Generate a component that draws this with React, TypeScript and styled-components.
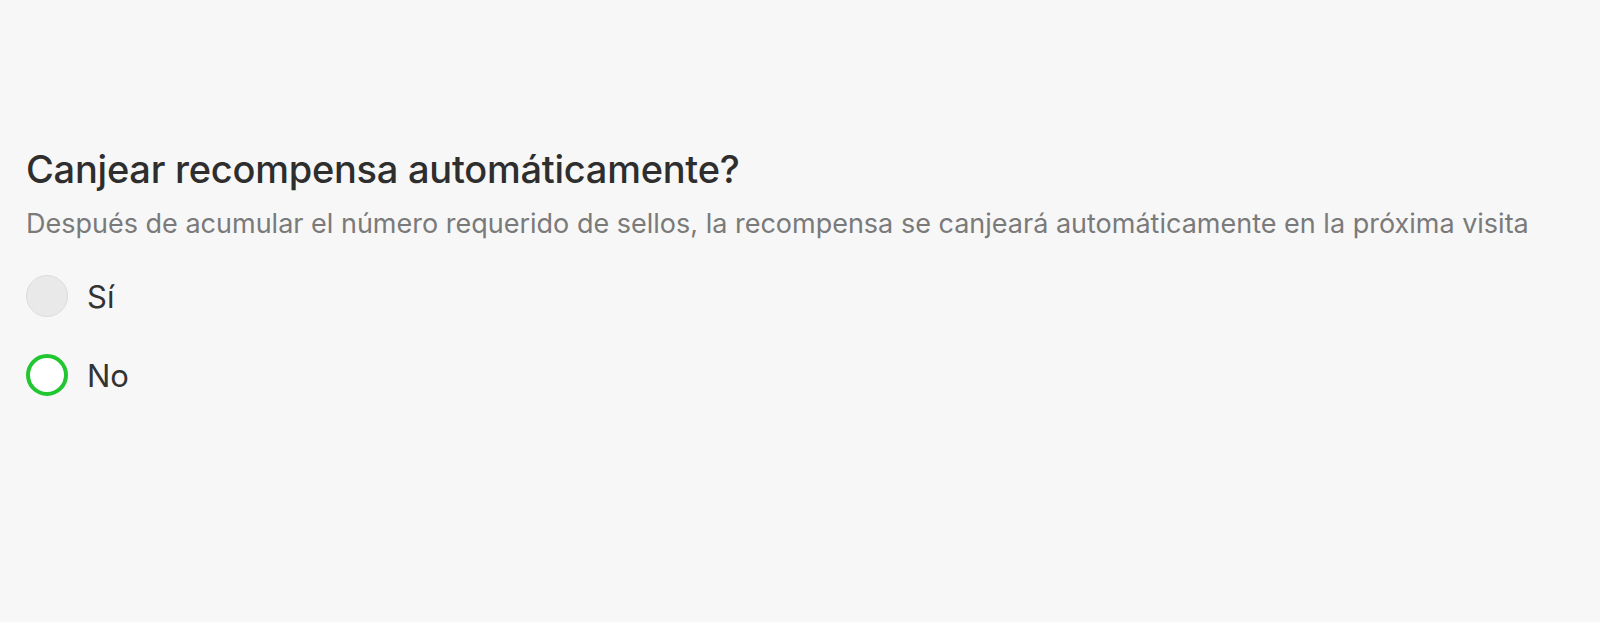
import { FC, useState } from "react";
import styled, { createGlobalStyle } from "styled-components";

const GlobalStyle = createGlobalStyle`
  html, body {
    margin: 0;
    padding: 0;
    background: #f7f7f7;
  }
  body {
    font-family: Inter, "Noto Sans", sans-serif;
  }
`;

const Page = styled.div`
  width: 1600px;
  height: 622px;
  padding: 145px 26px 0;
  box-sizing: border-box;
  background: #f7f7f7;
`;

const Title = styled.h2`
  margin: 0;
  font-size: 38px;
  font-weight: 500;
  color: #2e2e2e;
  letter-spacing: -0.25px;
  line-height: 48px;
`;

const Subtitle = styled.p`
  margin: 13px 0 0;
  font-size: 27px;
  font-weight: 400;
  color: #7a7a7a;
  line-height: 36px;
`;

const Options = styled.div`
  display: flex;
  flex-direction: column;
  gap: 37px;
  margin-top: 33px;
`;

const Option = styled.label`
  display: flex;
  align-items: center;
  gap: 19px;
  cursor: pointer;
`;

const Circle = styled.span<{ $checked: boolean }>`
  width: 42px;
  height: 42px;
  border-radius: 50%;
  box-sizing: border-box;
  background: ${(p) => (p.$checked ? "#ffffff" : "#e9e9e9")};
  border: ${(p) => (p.$checked ? "4px solid #22c630" : "1.5px solid #dcdcdc")};
`;

const OptionText = styled.span`
  font-size: 31px;
  color: #333333;
`;

const App: FC = () => {
  const [value, setValue] = useState("no");
  const options = [
    { id: "si", label: "Sí" },
    { id: "no", label: "No" },
  ];

  return (
    <>
      <GlobalStyle />
      <Page>
        <Title>Canjear recompensa automáticamente?</Title>
        <Subtitle>
          Después de acumular el número requerido de sellos, la recompensa se
          canjeará automáticamente en la próxima visita
        </Subtitle>
        <Options>
          {options.map((o) => (
            <Option key={o.id} onClick={() => setValue(o.id)}>
              <Circle $checked={value === o.id} />
              <OptionText>{o.label}</OptionText>
            </Option>
          ))}
        </Options>
      </Page>
    </>
  );
};

export default App;
